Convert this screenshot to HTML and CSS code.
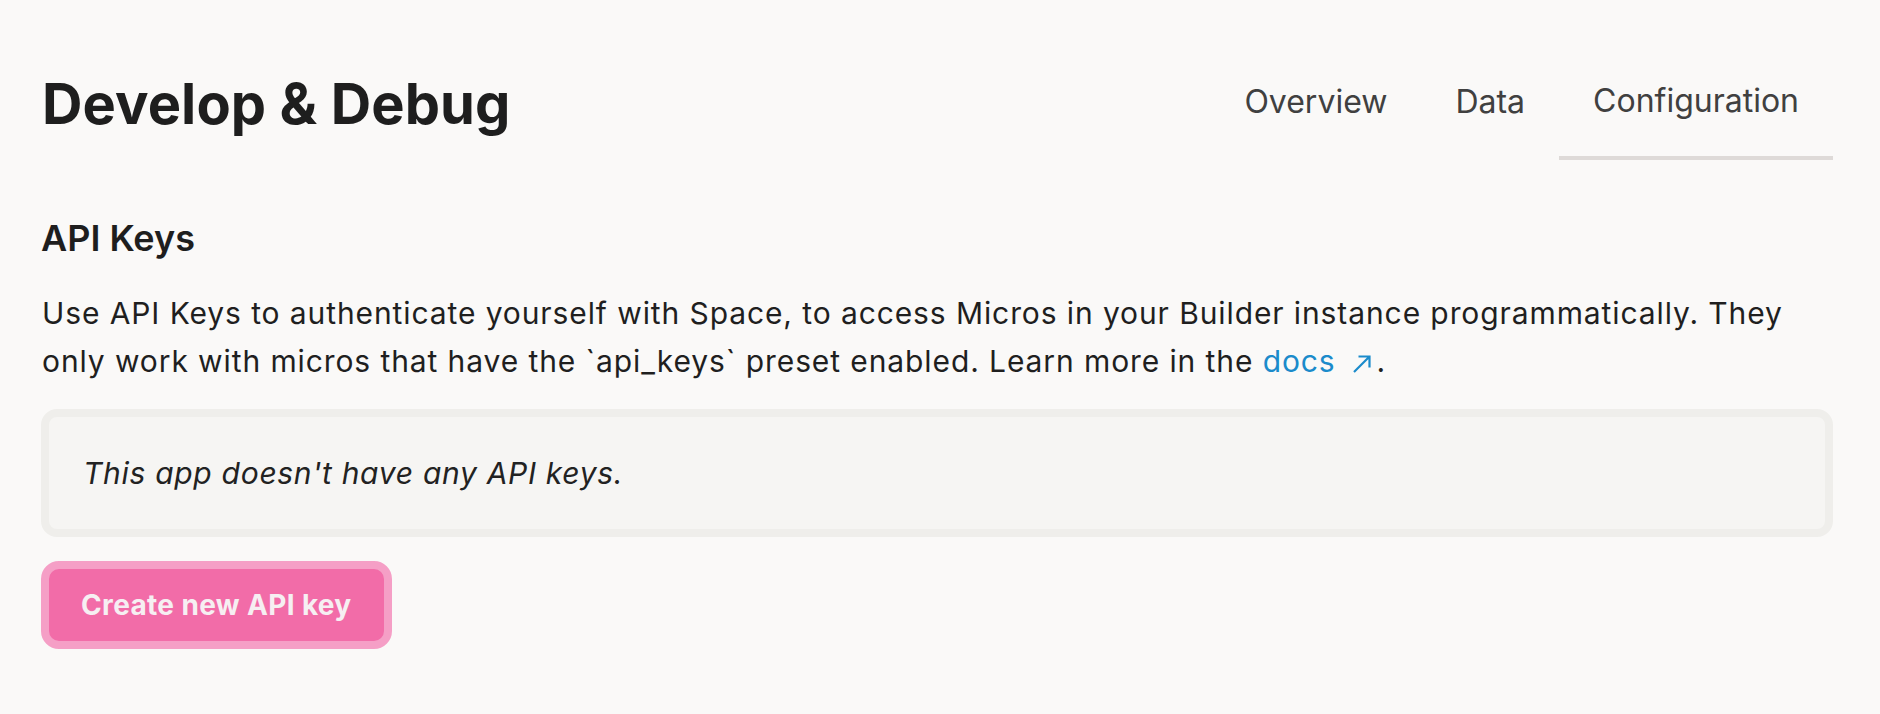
FILE: index.html
```html
<!DOCTYPE html>
<html lang="en">
<head>
<meta charset="utf-8">
<title>Develop &amp; Debug</title>
<link rel="stylesheet" href="styles.css">
</head>
<body>
<div class="page">
  <header class="header">
    <h1 class="title">Develop &amp; Debug</h1>
    <nav class="tabs">
      <a class="tab">Overview</a>
      <a class="tab">Data</a>
      <a class="tab tab-active">Configuration</a>
    </nav>
  </header>
  <section class="section">
    <h2 class="section-title">API Keys</h2>
    <p class="desc">Use API Keys to authenticate yourself with Space, to access Micros in your Builder instance programmatically. They only work with micros that have the `api_keys` preset enabled. Learn more in the <a class="link">docs<svg class="ext" width="20" height="18" viewBox="0 0 20 18" aria-hidden="true"><path d="M2 17 L17.5 1.5 M6.5 1.5 H17.5 V12.5" fill="none" stroke="currentColor" stroke-width="2.2"/></svg></a>.</p>
    <div class="empty">
      <p class="empty-text">This app doesn't have any API keys.</p>
    </div>
    <button class="btn">Create new API key</button>
  </section>
</div>
</body>
</html>
```
FILE: styles.css
```css
* { box-sizing: border-box; }
html, body { margin: 0; padding: 0; }
body {
  background: #faf9f8;
  color: #1f1f1f;
  font-family: Inter, "Noto Sans", "Liberation Sans", sans-serif;
  height: 714px;
  overflow: hidden;
}
.page {
  padding: 71px 47px 0 41px;
}
.header {
  display: flex;
  justify-content: space-between;
  align-items: flex-start;
}
.title {
  margin: 0 0 0 1px;
  font-size: 56px;
  line-height: 67px;
  font-weight: 700;
  letter-spacing: 0.1px;
  color: #1e1e1e;
}
.tabs {
  display: flex;
  margin-top: 7px;
}
.tab {
  display: block;
  padding: 0 34px 30px;
  font-size: 32px;
  line-height: 48px;
  color: #404040;
  border-bottom: 4px solid transparent;
}
.tab-active {
  border-bottom-color: #dedad8;
  margin-top: -1px;
  padding-bottom: 31px;
}
.section {
  padding-top: 55px;
}
.section-title {
  margin: 0 0 27px 0;
  font-size: 36px;
  line-height: 47px;
  font-weight: 600;
  color: #1e1e1e;
}
.desc {
  margin: 0 0 24px 1px;
  font-size: 30px;
  line-height: 48px;
  letter-spacing: 0.9px;
  color: #1f1f1f;
}
.link {
  color: #1b8bcb;
  text-decoration: none;
}
.ext {
  display: inline-block;
  vertical-align: -1px;
  margin-left: 16px;
  margin-right: 5px;
}
.empty {
  border: 8px solid #efeeeb;
  background: #f6f5f3;
  border-radius: 16px;
  padding: 32px 34px;
}
.empty-text {
  margin: 0;
  font-size: 30px;
  line-height: 48px;
  font-style: italic;
  letter-spacing: 0.7px;
  color: #222;
}
.btn {
  display: block;
  margin-top: 24px;
  border: 8px solid #f59fc6;
  background: #f26ca8;
  border-radius: 18px;
  padding: 16px 32px;
  font-family: Inter, "Noto Sans", "Liberation Sans", sans-serif;
  font-size: 28px;
  line-height: 40px;
  font-weight: 700;
  letter-spacing: 0.35px;
  color: #f6eff2;
  cursor: pointer;
}
```
